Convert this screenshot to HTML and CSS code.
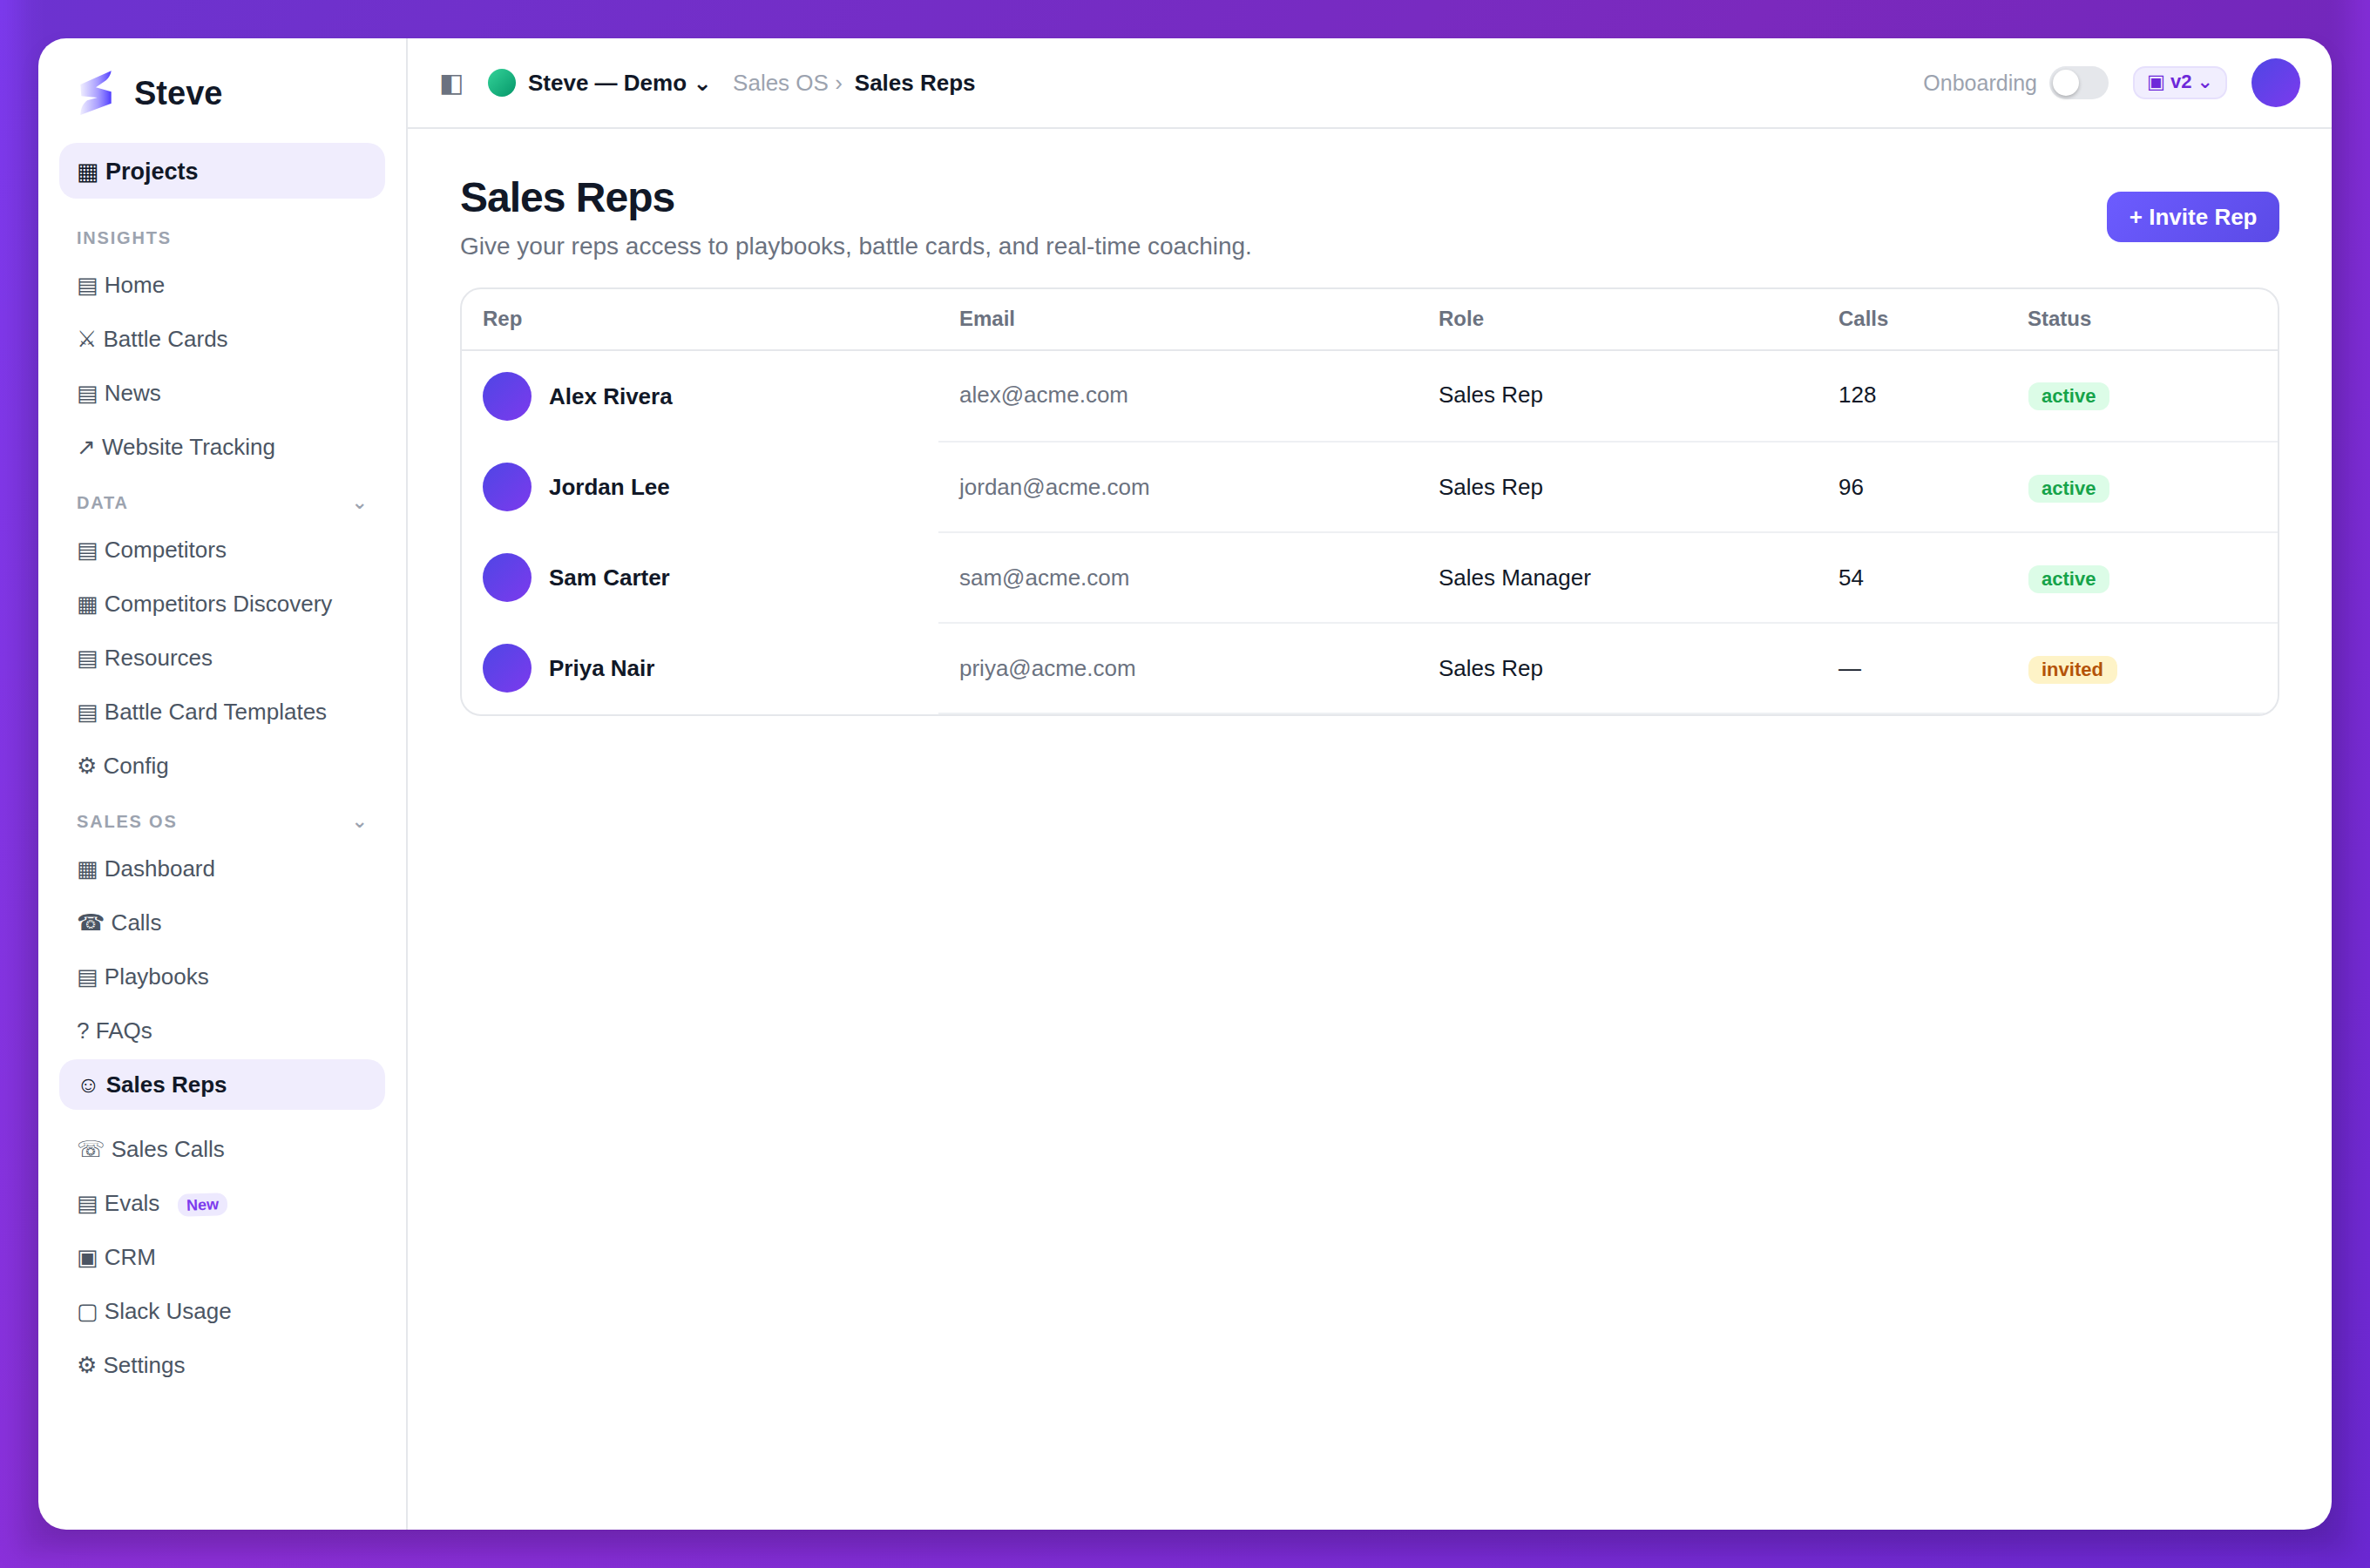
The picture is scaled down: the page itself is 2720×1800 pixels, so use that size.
FILE: index.html
```html
<!DOCTYPE html>
<html lang="en">
<head>
<meta charset="utf-8">
<title>Sales Reps</title>
<link rel="stylesheet" href="styles.css">
</head>
<body>
<div class="window">
  <aside class="sidebar">
    <div class="brand">
      <svg class="logo" viewBox="0 0 36 52" width="36" height="52">
        <defs>
          <linearGradient id="lg" x1="0" y1="0" x2="1" y2="0">
            <stop offset="0" stop-color="#7c6cff" stop-opacity="0.12"/>
            <stop offset="0.55" stop-color="#7c6cff" stop-opacity="0.65"/>
            <stop offset="1" stop-color="#4f3cff"/>
          </linearGradient>
        </defs>
        <path fill="url(#lg)" d="M.3 16L35.7 .3C35 5 33 8 30 11L18 19.3L35.7 24.3V37.7L.3 51C.5 44 3 38 8 34.3L19.7 31L1.3 29.3Z"/>
      </svg>
      <span class="brand-name">Steve</span>
    </div>
    <a class="item top active">▦ Projects</a>
    <div class="label first">INSIGHTS</div>
    <div class="group">
      <a class="item">▤ Home</a>
      <a class="item">⚔ Battle Cards</a>
      <a class="item">▤ News</a>
      <a class="item">↗ Website Tracking</a>
    </div>
    <div class="label">DATA<span class="label-chev">⌄</span></div>
    <div class="group">
      <a class="item">▤ Competitors</a>
      <a class="item">▦ Competitors Discovery</a>
      <a class="item">▤ Resources</a>
      <a class="item">▤ Battle Card Templates</a>
      <a class="item">⚙ Config</a>
    </div>
    <div class="label">SALES OS<span class="label-chev">⌄</span></div>
    <div class="group">
      <a class="item">▦ Dashboard</a>
      <a class="item">☎ Calls</a>
      <a class="item">▤ Playbooks</a>
      <a class="item">? FAQs</a>
      <a class="item active">☺ Sales Reps</a>
    </div>
    <div class="group tail">
      <a class="item">☏ Sales Calls</a>
      <a class="item">▤ Evals<span class="new">New</span></a>
      <a class="item">▣ CRM</a>
      <a class="item">▢ Slack Usage</a>
      <a class="item">⚙ Settings</a>
    </div>
  </aside>
  <div class="main">
    <header class="topbar">
      <span class="panel-icon">◧</span>
      <span class="dot"></span>
      <span class="workspace">Steve — Demo ⌄</span>
      <span class="crumb">Sales OS ›</span>
      <span class="crumb-current">Sales Reps</span>
      <span class="onboarding">Onboarding</span>
      <span class="toggle"><span class="knob"></span></span>
      <span class="version">▣ v2 ⌄</span>
      <span class="user"></span>
    </header>
    <main class="content">
      <div class="page-head">
        <div>
          <h1 class="title">Sales Reps</h1>
          <p class="subtitle">Give your reps access to playbooks, battle cards, and real-time coaching.</p>
        </div>
        <button class="invite">+ Invite Rep</button>
      </div>
      <div class="table-card">
        <table class="reps">
          <thead>
            <tr>
              <th class="c-rep">Rep</th>
              <th class="c-email">Email</th>
              <th class="c-role">Role</th>
              <th class="c-calls">Calls</th>
              <th class="c-status">Status</th>
            </tr>
          </thead>
          <tbody>
            <tr class="first-row">
              <td class="rep"><span class="avatar"></span><span class="name">Alex Rivera</span></td>
              <td class="email">alex@acme.com</td>
              <td>Sales Rep</td>
              <td>128</td>
              <td><span class="badge ok">active</span></td>
            </tr>
            <tr>
              <td class="rep"><span class="avatar"></span><span class="name">Jordan Lee</span></td>
              <td class="email">jordan@acme.com</td>
              <td>Sales Rep</td>
              <td>96</td>
              <td><span class="badge ok">active</span></td>
            </tr>
            <tr>
              <td class="rep"><span class="avatar"></span><span class="name">Sam Carter</span></td>
              <td class="email">sam@acme.com</td>
              <td>Sales Manager</td>
              <td>54</td>
              <td><span class="badge ok">active</span></td>
            </tr>
            <tr>
              <td class="rep"><span class="avatar"></span><span class="name">Priya Nair</span></td>
              <td class="email">priya@acme.com</td>
              <td>Sales Rep</td>
              <td>—</td>
              <td><span class="badge warn">invited</span></td>
            </tr>
          </tbody>
        </table>
      </div>
    </main>
  </div>
</div>
</body>
</html>
```
FILE: styles.css
```css
* { box-sizing: border-box; }
html, body { margin: 0; height: 100%; }
body {
  position: relative;
  padding: 44px;
  width: 2720px;
  height: 1800px;
  overflow: hidden;
  font-family: "Liberation Sans", "DejaVu Sans", sans-serif;
  color: #111827;
  background: linear-gradient(135deg, #7c3aed 0%, #8c2fd8 45%, #6b28d2 100%);
}
body::before {
  content: "";
  position: absolute;
  left: 22px;
  right: 22px;
  top: -200px;
  bottom: 16px;
  background: rgba(0, 0, 0, .12);
  filter: blur(14px);
}
.window {
  position: relative;
  display: flex;
  height: 1712px;
  background: #fff;
  border-radius: 32px;
  overflow: hidden;
  box-shadow: 0 10px 24px rgba(0, 0, 0, .08);
}
.sidebar {
  width: 424px;
  flex: none;
  padding: 24px 24px 0;
  border-right: 2px solid #e5e7eb;
  display: flex;
  flex-direction: column;
}
.brand {
  height: 78px;
  margin-bottom: 18px;
  padding-left: 24px;
  display: flex;
  align-items: center;
  gap: 26px;
}
.logo { flex: none; }
.brand-name { font-size: 38px; font-weight: 700; line-height: 44px; }
.group { display: flex; flex-direction: column; gap: 4px; }
.item {
  display: block;
  padding: 14px 20px;
  font-size: 26px;
  line-height: 30px;
  height: 58px;
  color: #4b5563;
  border-radius: 20px;
  white-space: nowrap;
}
.item.active { background: #f0edfd; color: #111827; font-weight: 700; }
.item.top { height: 64px; padding: 18px 20px 16px; font-size: 27px; }
.label {
  display: flex;
  justify-content: space-between;
  height: 24px;
  margin: 23px 0 13px;
  padding: 0 20px;
  font-size: 20px;
  line-height: 24px;
  font-weight: 700;
  letter-spacing: 1.8px;
  color: #9ca3af;
}
.label.first { margin-top: 33px; margin-bottom: 13px; }
.label-chev { font-size: 22px; letter-spacing: 0; }
.tail { margin-top: 16px; }
.new {
  display: inline-block;
  margin-left: 21px;
  padding: 2px 10px;
  font-size: 18px;
  line-height: 22px;
  font-weight: 700;
  color: #7c3aed;
  background: #ede9fe;
  border-radius: 12px;
  transform: rotate(-2deg);
  vertical-align: 1px;
}
.main { flex: 1; min-width: 0; display: flex; flex-direction: column; }
.topbar {
  height: 104px;
  flex: none;
  padding: 0 36px;
  border-bottom: 2px solid #e5e7eb;
  display: flex;
  align-items: center;
  font-size: 26px;
  line-height: 30px;
}
.panel-icon { width: 28px; margin-right: 28px; font-size: 30px; color: #6b7280; }
.dot { width: 32px; height: 32px; border-radius: 50%; background: linear-gradient(135deg, #34d399, #059669); }
.workspace { margin-left: 14px; font-weight: 700; }
.crumb { margin-left: 24px; color: #9ca3af; }
.crumb-current { margin-left: 14px; font-weight: 700; }
.onboarding { margin-left: auto; font-size: 25px; color: #9ca3af; }
.toggle {
  width: 68px;
  height: 38px;
  margin-left: 14px;
  padding: 4px;
  background: #e5e7eb;
  border-radius: 19px;
}
.knob {
  display: block;
  width: 30px;
  height: 30px;
  border-radius: 50%;
  background: #fff;
  box-shadow: 0 2px 4px rgba(0,0,0,.25);
}
.version {
  width: 108px;
  height: 38px;
  margin-left: 28px;
  background: #f1eefe;
  border: 2px solid #e6e0fc;
  border-radius: 14px;
  color: #6d28d9;
  font-size: 22px;
  line-height: 32px;
  font-weight: 700;
  text-align: center;
  white-space: nowrap;
}
.user {
  width: 56px;
  height: 56px;
  margin-left: 28px;
  border-radius: 50%;
  background: linear-gradient(135deg, #4f46e5, #7c3aed);
}
.content { flex: 1; padding: 51px 60px 0; }
.page-head {
  display: flex;
  justify-content: space-between;
  align-items: center;
  margin-bottom: 27px;
}
.title {
  margin: 0 0 8px;
  font-size: 48px;
  line-height: 56px;
  letter-spacing: -1px;
  font-weight: 700;
}
.subtitle { margin: 0; font-size: 28px; line-height: 40px; color: #6b7280; }
.invite {
  height: 58px;
  margin-bottom: 4px;
  padding: 0 25.5px;
  border: 0;
  border-radius: 16px;
  font: 700 26px/30px "Liberation Sans", sans-serif;
  color: #fff;
  background: linear-gradient(135deg, #6c5cff, #5b4ae6);
}
.table-card {
  border: 2px solid #e5e7eb;
  border-radius: 24px;
  overflow: hidden;
}
.reps { width: 100%; table-layout: fixed; border-collapse: collapse; }
.c-rep { width: 547px; }
.c-email { width: 550px; }
.c-role { width: 459px; }
.c-calls { width: 217px; }
.reps th {
  height: 70px;
  padding: 0 24px 1px;
  text-align: left;
  font-size: 24px;
  line-height: 28px;
  font-weight: 700;
  color: #6b7280;
  border-bottom: 2px solid #e5e7eb;
}
.reps td {
  padding: 0 24px;
  height: 104px;
  font-size: 26px;
  line-height: 30px;
  border-bottom: 2px solid #eef0f3;
}
.reps .first-row td { padding-bottom: 3px; }
.reps td.email { color: #6b7280; }
.reps td.rep,
.reps .first-row td.rep {
  display: flex;
  align-items: center;
  gap: 20px;
  padding: 24px;
  border-bottom: 0;
}
.avatar {
  width: 56px;
  height: 56px;
  flex: none;
  border-radius: 50%;
  background: linear-gradient(135deg, #4f46e5, #7c3aed);
}
.name { font-weight: 700; }
.badge {
  display: inline-block;
  margin-left: 1px;
  padding: 3px 16px 3px 15px;
  border-radius: 12px;
  font-size: 22px;
  line-height: 26px;
  font-weight: 700;
  vertical-align: -3px;
}
.ok { background: #dcfce7; color: #16a34a; }
.warn { background: #fef3c7; color: #b45309; }
```
